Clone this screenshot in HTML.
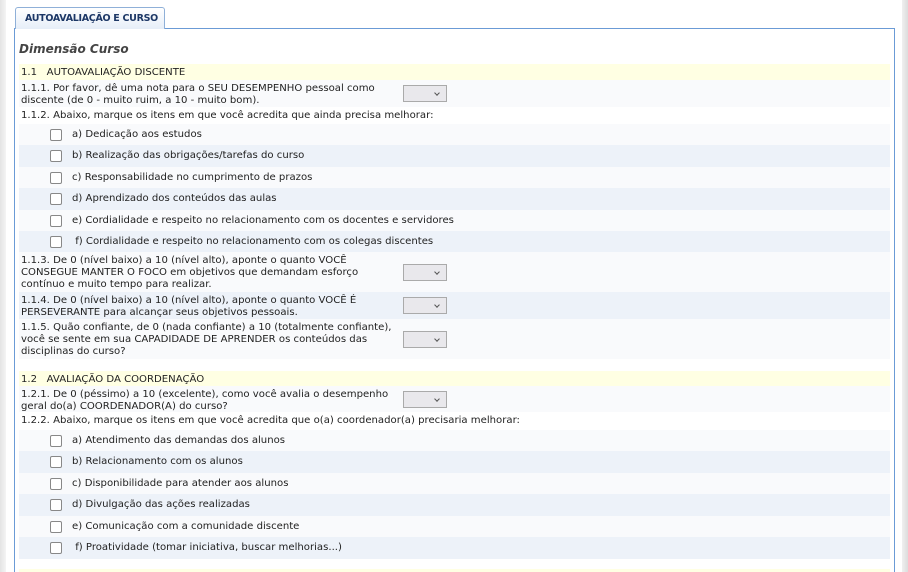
<!DOCTYPE html>
<html style="overflow:hidden"><head><meta charset="utf-8"><style>
*{margin:0;padding:0;box-sizing:border-box}
html,body{width:908px;height:572px;overflow:hidden}
body{background:#fff;font-family:"DejaVu Sans","Liberation Sans",sans-serif;font-size:10.1px;color:#222;position:relative}
.ls{position:absolute;left:0;top:0;width:6px;height:572px;background:linear-gradient(90deg,#e4e4e4,#f4f4f4)}
.rs{position:absolute;right:0;top:0;width:6px;height:572px;background:linear-gradient(90deg,#f0f0f0,#dcdcdc)}
.tab{position:absolute;left:15px;top:7px;width:150px;height:22px;border:1px solid #8fb0d8;border-bottom:none;border-radius:3px 3px 0 0;background:linear-gradient(#fff,#e6eef8);font-weight:bold;color:#1c3766;font-size:9.5px;padding:5px 0 0 9px;white-space:nowrap;letter-spacing:-0.3px}
.panel{position:absolute;left:14px;top:28px;width:881px;height:544px;border:1px solid #6b9bd6;border-bottom:none}
.t{position:absolute;left:19px;width:871px;line-height:12px;white-space:nowrap}
.h{background:#ffffe3;padding:3px 0 0 2px}
.l{background:#f9fafc}
.b{background:#edf2f9}
.w{background:#fff}
.q{padding:3px 0 0 2px}
.sel{position:absolute;left:384px;width:44px;height:17px;border:1px solid #aaa;background:#e9e8ec}
.sel:after{content:"";position:absolute;right:7px;top:5px;width:3px;height:3px;border-right:1px solid #555;border-bottom:1px solid #555;transform:rotate(45deg)}
.cb{position:absolute;left:31px;top:5px;width:12px;height:12px;border:1px solid #888;border-radius:2px;background:#fff}
.c .tx{position:absolute;left:53px;top:5px}
h2{position:absolute;left:19px;top:42px;font-size:12px;font-style:italic;font-weight:bold;color:#444}
</style></head><body>
<div class="ls"></div><div class="rs"></div>
<div class="panel"></div>
<div class="tab">AUTOAVALIAÇÃO E CURSO</div>
<h2>Dimensão Curso</h2>

<div class="t h" style="top:64px;height:16px">1.1&nbsp;&nbsp; AUTOAVALIAÇÃO DISCENTE</div>
<div class="t l q" style="top:80px;height:27px">1.1.1. Por favor, dê uma nota para o SEU DESEMPENHO pessoal como<br>discente (de 0 - muito ruim, a 10 - muito bom).<div class="sel" style="top:5px"></div></div>
<div class="t w q" style="top:107px;height:17px">1.1.2. Abaixo, marque os itens em que você acredita que ainda precisa melhorar:</div>
<div class="t l c" style="top:124px;height:21px"><div class="cb"></div><span class="tx">a) Dedicação aos estudos</span></div>
<div class="t b c" style="top:145px;height:22px"><div class="cb"></div><span class="tx">b) Realização das obrigações/tarefas do curso</span></div>
<div class="t l c" style="top:167px;height:21px"><div class="cb"></div><span class="tx">c) Responsabilidade no cumprimento de prazos</span></div>
<div class="t b c" style="top:188px;height:22px"><div class="cb"></div><span class="tx">d) Aprendizado dos conteúdos das aulas</span></div>
<div class="t l c" style="top:210px;height:21px"><div class="cb"></div><span class="tx">e) Cordialidade e respeito no relacionamento com os docentes e servidores</span></div>
<div class="t b c" style="top:231px;height:21px"><div class="cb"></div><span class="tx">&nbsp;f) Cordialidade e respeito no relacionamento com os colegas discentes</span></div>
<div class="t l q" style="top:252px;height:40px">1.1.3. De 0 (nível baixo) a 10 (nível alto), aponte o quanto VOCÊ<br>CONSEGUE MANTER O FOCO em objetivos que demandam esforço<br>contínuo e muito tempo para realizar.<div class="sel" style="top:12px"></div></div>
<div class="t b q" style="top:292px;height:27px">1.1.4. De 0 (nível baixo) a 10 (nível alto), aponte o quanto VOCÊ É<br>PERSEVERANTE para alcançar seus objetivos pessoais.<div class="sel" style="top:5px"></div></div>
<div class="t l q" style="top:319px;height:40px">1.1.5. Quão confiante, de 0 (nada confiante) a 10 (totalmente confiante),<br>você se sente em sua CAPADIDADE DE APRENDER os conteúdos das<br>disciplinas do curso?<div class="sel" style="top:12px"></div></div>

<div class="t h" style="top:371px;height:15px">1.2&nbsp;&nbsp; AVALIAÇÃO DA COORDENAÇÃO</div>
<div class="t l q" style="top:386px;height:26px">1.2.1. De 0 (péssimo) a 10 (excelente), como você avalia o desempenho<br>geral do(a) COORDENADOR(A) do curso?<div class="sel" style="top:5px"></div></div>
<div class="t w q" style="top:412px;height:18px">1.2.2. Abaixo, marque os itens em que você acredita que o(a) coordenador(a) precisaria melhorar:</div>
<div class="t l c" style="top:430px;height:21px"><div class="cb"></div><span class="tx">a) Atendimento das demandas dos alunos</span></div>
<div class="t b c" style="top:451px;height:22px"><div class="cb"></div><span class="tx">b) Relacionamento com os alunos</span></div>
<div class="t l c" style="top:473px;height:21px"><div class="cb"></div><span class="tx">c) Disponibilidade para atender aos alunos</span></div>
<div class="t b c" style="top:494px;height:22px"><div class="cb"></div><span class="tx">d) Divulgação das ações realizadas</span></div>
<div class="t l c" style="top:516px;height:21px"><div class="cb"></div><span class="tx">e) Comunicação com a comunidade discente</span></div>
<div class="t b c" style="top:537px;height:22px"><div class="cb"></div><span class="tx">&nbsp;f) Proatividade (tomar iniciativa, buscar melhorias...)</span></div>
<div class="t" style="top:569px;height:3px;background:#ffffe3"></div>
</body></html>
